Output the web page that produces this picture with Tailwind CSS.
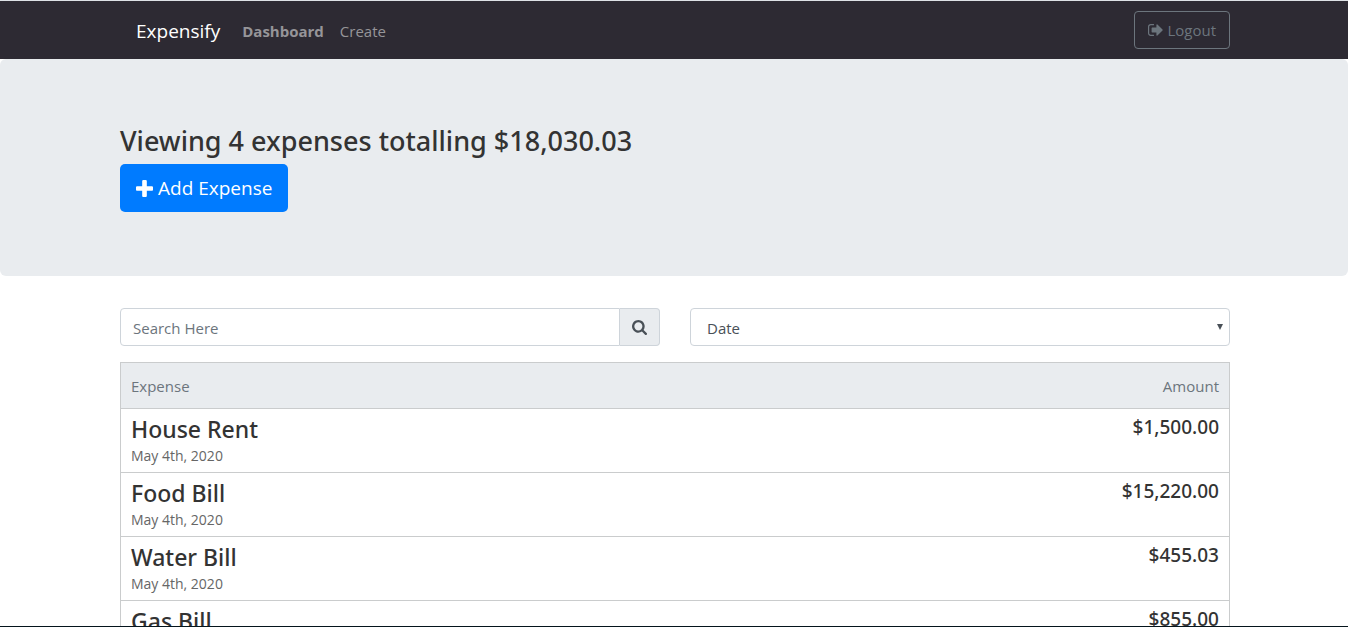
<!DOCTYPE html>
<html lang="en">
<head>
<meta charset="utf-8">
<meta name="viewport" content="width=device-width, initial-scale=1">
<title>Expensify</title>
<script src="https://cdn.jsdelivr.net/npm/@tailwindcss/browser@4"></script>
</head>
<body class="h-screen overflow-hidden bg-white font-['Open_Sans','Noto_Sans',sans-serif] text-[15px] leading-6 text-[#333]">
  <header class="border-t border-[#dee2e6] bg-[#2d2a33] pl-0.5">
    <nav class="mx-auto flex h-[58px] max-w-[1110px] items-center">
      <a href="#" class="pt-0.5 pl-4 text-[19px] leading-8 text-white">Expensify</a>
      <a href="#" class="ml-[22px] pt-0.5 font-bold text-[#969599]">Dashboard</a>
      <a href="#" class="ml-4 pt-0.5 text-[#969599]">Create</a>
      <button type="button" class="ml-auto flex h-[38px] items-center gap-1 rounded border border-[#6c757d] px-[13px] text-[#6c757d]">
        <svg class="h-[14px] w-[15px]" viewBox="64 192 1600 1408" fill="currentColor" aria-hidden="true"><path d="M704 1440q0 4 1 20t.5 26.500-3 23.500-10 19.500-20.500 6.500H352q-119 0-203.500-84.500T64 1248V544q0-119 84.500-203.500T352 256h320q13 0 22.500 9.500T704 288q0 4 1 20t.5 26.500-3 23.500-10 19.500T672 384H352q-66 0-113 47t-47 113v704q0 66 47 113t113 47h312l11.500 1 11.500 3 8 5.500 7 9 2 13.500zm928-544q0 26-19 45l-544 544q-19 19-45 19t-45-19-19-45v-288H512q-26 0-45-19t-19-45V704q0-26 19-45t45-19h448V352q0-26 19-45t45-19 45 19l544 544q19 19 19 45z"/></svg>
        <span>Logout</span>
      </button>
    </nav>
  </header>

  <section class="rounded-md bg-[#e9ecef] py-16 pl-0.5">
    <div class="mx-auto max-w-[1110px]">
      <h1 class="mb-[5px] font-['Noto_Sans',sans-serif] text-[27px] leading-9 font-medium">Viewing 4 expenses totalling $18,030.03</h1>
      <a href="#" class="inline-flex h-12 items-center gap-[5px] rounded-[5px] bg-[#007bff] px-4 align-top text-[19px] text-white">
        <svg class="size-[17px]" viewBox="192 128 1408 1408" fill="currentColor" aria-hidden="true"><path d="M1600 736v192q0 40-28 68t-68 28h-416v416q0 40-28 68t-68 28H800q-40 0-68-28t-28-68v-416H288q-40 0-68-28t-28-68V736q0-40 28-68t68-28h416V224q0-40 28-68t68-28h192q40 0 68 28t28 68v416h416q40 0 68 28t28 68z"/></svg>
        <span>Add Expense</span>
      </a>
    </div>
  </section>

  <main class="pt-8 pl-0.5">
    <div class="mx-auto max-w-[1110px]">
      <form class="mb-4 grid grid-cols-2 gap-[30px]">
        <div class="flex h-[38px]">
          <input type="text" aria-label="Search expenses" placeholder="Search Here" class="min-w-0 flex-1 rounded-l border border-[#ced4da] px-3 pt-0.5 placeholder:text-[#6c757d]">
          <button type="button" aria-label="Search" class="flex w-10 items-center justify-center rounded-r border border-l-0 border-[#ced4da] bg-[#e9ecef] text-[#495057]">
            <svg class="size-[15px]" viewBox="0 128 1664 1664" fill="currentColor" aria-hidden="true"><path d="M1152 832q0-185-131.500-316.500T704 384 387.500 515.500 256 832t131.500 316.500T704 1280t316.500-131.500T1152 832zm512 832q0 52-38 90t-90 38q-54 0-90-38l-343-342q-179 124-399 124-143 0-273.500-55.500t-225-150-150-225T0 832t55.500-273.500 150-225 225-150T704 128t273.500 55.500 225 150 150 225T1408 832q0 220-124 399l343 343q37 37 37 90z"/></svg>
          </button>
        </div>
        <div class="relative">
          <select aria-label="Sort by" class="h-[38px] w-full appearance-none rounded border border-[#ced4da] bg-white px-4 pt-0.5 text-[#495057]">
            <option>Date</option>
            <option>Amount</option>
          </select>
          <svg class="pointer-events-none absolute top-4 right-[7px] h-[6px] w-[6px]" viewBox="0 0 6 6" fill="#495057" aria-hidden="true"><path d="M0 0h6L3 6z"/></svg>
        </div>
      </form>

      <table class="w-full border-collapse border border-[#cacccd]">
        <thead>
          <tr class="h-[46px] border-b border-[#cacccd] bg-[#e9ecef] text-[#6c757d]">
            <th scope="col" class="px-[10px] text-left font-normal">Expense</th>
            <th scope="col" class="px-[10px] text-right font-normal">Amount</th>
          </tr>
        </thead>
        <tbody>
          <tr class="h-16 border-b border-[#cacccd] align-top">
            <td class="px-[10px] pt-1.5"><a href="#" class="block"><span class="block font-['Noto_Sans',sans-serif] text-[23px] leading-7 font-medium">House Rent</span><span class="block pt-[3px] text-sm text-[#666]">May 4th, 2020</span></a></td>
            <td class="px-[10px] pt-1.5 text-right font-['Noto_Sans',sans-serif] text-[19px] leading-6 font-medium">$1,500.00</td>
          </tr>
          <tr class="h-16 border-b border-[#cacccd] align-top">
            <td class="px-[10px] pt-1.5"><a href="#" class="block"><span class="block font-['Noto_Sans',sans-serif] text-[23px] leading-7 font-medium">Food Bill</span><span class="block pt-[3px] text-sm text-[#666]">May 4th, 2020</span></a></td>
            <td class="px-[10px] pt-1.5 text-right font-['Noto_Sans',sans-serif] text-[19px] leading-6 font-medium">$15,220.00</td>
          </tr>
          <tr class="h-16 border-b border-[#cacccd] align-top">
            <td class="px-[10px] pt-1.5"><a href="#" class="block"><span class="block font-['Noto_Sans',sans-serif] text-[23px] leading-7 font-medium">Water Bill</span><span class="block pt-[3px] text-sm text-[#666]">May 4th, 2020</span></a></td>
            <td class="px-[10px] pt-1.5 text-right font-['Noto_Sans',sans-serif] text-[19px] leading-6 font-medium">$455.03</td>
          </tr>
          <tr class="h-16 border-b border-[#cacccd] align-top">
            <td class="px-[10px] pt-1.5"><a href="#" class="block"><span class="block font-['Noto_Sans',sans-serif] text-[23px] leading-7 font-medium">Gas Bill</span><span class="block pt-[3px] text-sm text-[#666]">May 4th, 2020</span></a></td>
            <td class="px-[10px] pt-1.5 text-right font-['Noto_Sans',sans-serif] text-[19px] leading-6 font-medium">$855.00</td>
          </tr>
        </tbody>
      </table>
    </div>
  </main>
  <div class="fixed inset-x-0 bottom-0 h-px bg-[#05141c]"></div>
</body>
</html>
